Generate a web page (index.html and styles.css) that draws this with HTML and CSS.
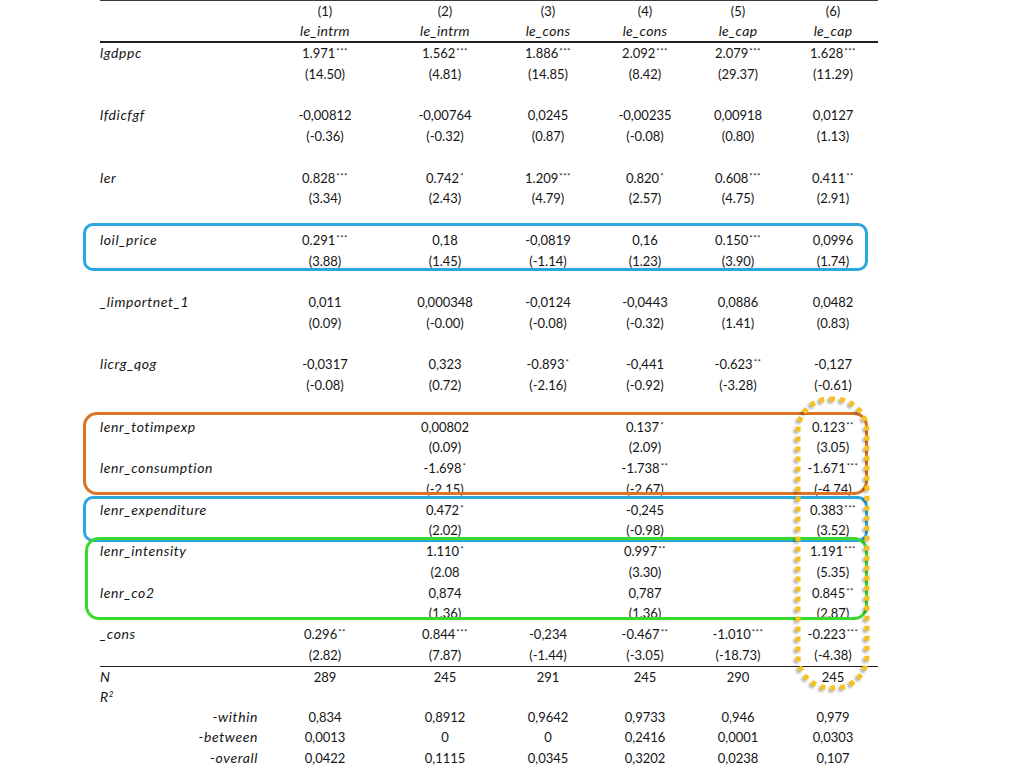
FILE: index.html
```html
<!DOCTYPE html>
<html>
<head>
<meta charset="utf-8">
<link rel="stylesheet" href="styles.css">
</head>
<body>
<div class="sheet">
  <div class="table">
    <div class="head">
      <div class="r hr"><span></span><span>(1)</span><span>(2)</span><span>(3)</span><span>(4)</span><span>(5)</span><span>(6)</span></div>
      <div class="r hr it"><span></span><span>le_intrm</span><span>le_intrm</span><span>le_cons</span><span>le_cons</span><span>le_cap</span><span>le_cap</span></div>
    </div>
    <div class="body">
      <div class="r"><span class="lab">lgdppc</span><span>1.971<sup>***</sup></span><span>1.562<sup>***</sup></span><span>1.886<sup>***</sup></span><span>2.092<sup>***</sup></span><span>2.079<sup>***</sup></span><span>1.628<sup>***</sup></span></div>
      <div class="r"><span></span><span>(14.50)</span><span>(4.81)</span><span>(14.85)</span><span>(8.42)</span><span>(29.37)</span><span>(11.29)</span></div>
      <div class="gap"></div>
      <div class="r"><span class="lab">lfdicfgf</span><span>-0,00812</span><span>-0,00764</span><span>0,0245</span><span>-0,00235</span><span>0,00918</span><span>0,0127</span></div>
      <div class="r"><span></span><span>(-0.36)</span><span>(-0.32)</span><span>(0.87)</span><span>(-0.08)</span><span>(0.80)</span><span>(1.13)</span></div>
      <div class="gap"></div>
      <div class="r"><span class="lab">ler</span><span>0.828<sup>***</sup></span><span>0.742<sup>*</sup></span><span>1.209<sup>***</sup></span><span>0.820<sup>*</sup></span><span>0.608<sup>***</sup></span><span>0.411<sup>**</sup></span></div>
      <div class="r"><span></span><span>(3.34)</span><span>(2.43)</span><span>(4.79)</span><span>(2.57)</span><span>(4.75)</span><span>(2.91)</span></div>
      <div class="gap"></div>
      <div class="r"><span class="lab">loil_price</span><span>0.291<sup>***</sup></span><span>0,18</span><span>-0,0819</span><span>0,16</span><span>0.150<sup>***</sup></span><span>0,0996</span></div>
      <div class="r"><span></span><span>(3.88)</span><span>(1.45)</span><span>(-1.14)</span><span>(1.23)</span><span>(3.90)</span><span>(1.74)</span></div>
      <div class="gap"></div>
      <div class="r"><span class="lab">_limportnet_1</span><span>0,011</span><span>0,000348</span><span>-0,0124</span><span>-0,0443</span><span>0,0886</span><span>0,0482</span></div>
      <div class="r"><span></span><span>(0.09)</span><span>(-0.00)</span><span>(-0.08)</span><span>(-0.32)</span><span>(1.41)</span><span>(0.83)</span></div>
      <div class="gap"></div>
      <div class="r"><span class="lab">licrg_qog</span><span>-0,0317</span><span>0,323</span><span>-0.893<sup>*</sup></span><span>-0,441</span><span>-0.623<sup>**</sup></span><span>-0,127</span></div>
      <div class="r"><span></span><span>(-0.08)</span><span>(0.72)</span><span>(-2.16)</span><span>(-0.92)</span><span>(-3.28)</span><span>(-0.61)</span></div>
      <div class="gap"></div>
      <div class="r"><span class="lab">lenr_totimpexp</span><span></span><span>0,00802</span><span></span><span>0.137<sup>*</sup></span><span></span><span>0.123<sup>**</sup></span></div>
      <div class="r"><span></span><span></span><span>(0.09)</span><span></span><span>(2.09)</span><span></span><span>(3.05)</span></div>
      <div class="r"><span class="lab">lenr_consumption</span><span></span><span>-1.698<sup>*</sup></span><span></span><span>-1.738<sup>**</sup></span><span></span><span>-1.671<sup>***</sup></span></div>
      <div class="r"><span></span><span></span><span>(-2.15)</span><span></span><span>(-2.67)</span><span></span><span>(-4.74)</span></div>
      <div class="r"><span class="lab">lenr_expenditure</span><span></span><span>0.472<sup>*</sup></span><span></span><span>-0,245</span><span></span><span>0.383<sup>***</sup></span></div>
      <div class="r"><span></span><span></span><span>(2.02)</span><span></span><span>(-0.98)</span><span></span><span>(3.52)</span></div>
      <div class="r"><span class="lab">lenr_intensity</span><span></span><span>1.110<sup>*</sup></span><span></span><span>0.997<sup>**</sup></span><span></span><span>1.191<sup>***</sup></span></div>
      <div class="r"><span></span><span></span><span>(2.08</span><span></span><span>(3.30)</span><span></span><span>(5.35)</span></div>
      <div class="r"><span class="lab">lenr_co2</span><span></span><span>0,874</span><span></span><span>0,787</span><span></span><span>0.845<sup>**</sup></span></div>
      <div class="r"><span></span><span></span><span>(1.36)</span><span></span><span>(1.36)</span><span></span><span>(2.87)</span></div>
      <div class="r"><span class="lab">_cons</span><span>0.296<sup>**</sup></span><span>0.844<sup>***</sup></span><span>-0,234</span><span>-0.467<sup>**</sup></span><span>-1.010<sup>***</sup></span><span>-0.223<sup>***</sup></span></div>
      <div class="r"><span></span><span>(2.82)</span><span>(7.87)</span><span>(-1.44)</span><span>(-3.05)</span><span>(-18.73)</span><span>(-4.38)</span></div>
    </div>
    <div class="stats">
      <div class="r sr"><span class="lab">N</span><span>289</span><span>245</span><span>291</span><span>245</span><span>290</span><span>245</span></div>
      <div class="r sr"><span class="lab">R<sup class="two">2</sup></span><span></span><span></span><span></span><span></span><span></span><span></span></div>
      <div class="r sr"><span class="lab sub">-within</span><span>0,834</span><span>0,8912</span><span>0,9642</span><span>0,9733</span><span>0,946</span><span>0,979</span></div>
      <div class="r sr"><span class="lab sub">-between</span><span>0,0013</span><span>0</span><span>0</span><span>0,2416</span><span>0,0001</span><span>0,0303</span></div>
      <div class="r sr"><span class="lab sub">-overall</span><span>0,0422</span><span>0,1115</span><span>0,0345</span><span>0,3202</span><span>0,0238</span><span>0,107</span></div>
    </div>
  </div>

  <div class="mark blue b1"></div>
  <div class="mark orange"></div>
  <div class="mark blue b2"></div>
  <div class="mark green"></div>
  <svg class="dots" width="78" height="298" viewBox="0 0 78 298">
    <rect x="4" y="4" width="69" height="289" rx="32" ry="32" fill="none" stroke="#f6c21e" stroke-width="5" stroke-dasharray="5 5"/>
  </svg>
</div>
</body>
</html>
```

FILE: styles.css
```css
html, body {
  margin: 0;
  padding: 0;
  background: #ffffff;
}

body {
  font-family: Lato, "Open Sans", sans-serif;
  font-size: 13px;
  color: #151515;
}

.sheet {
  position: relative;
  width: 1024px;
  height: 768px;
  overflow: hidden;
}

.table {
  margin-left: 100px;
  width: 778px;
  border-top: 1px solid #3a3a3a;
}

.r {
  display: grid;
  grid-template-columns: 165px 120px 120px 86px 108px 78px 101px;
  height: 20.75px;
  line-height: 20.75px;
  text-align: center;
  white-space: nowrap;
}

.r > span:last-child {
  padding-left: 11px;
}

.hr {
  height: 20px;
  line-height: 20px;
}

.it span {
  font-style: italic;
  font-size: 14px;
  letter-spacing: 0.3px;
}

.head {
  border-bottom: 2px solid #1e1e1e;
}

.body {
  border-bottom: 1.5px solid #1e1e1e;
}

.stats {
  border-bottom: 1.5px solid #1e1e1e;
}

.sr {
  height: 20.25px;
  line-height: 20.25px;
}

.gap {
  height: 20.75px;
}

.lab {
  text-align: left;
  font-style: italic;
  font-size: 14px;
  letter-spacing: 0.6px;
}

.lab.sub {
  text-align: right;
  padding-right: 7px;
}

sup {
  font-size: 8px;
  line-height: 0;
  vertical-align: baseline;
  position: relative;
  top: -4px;
  margin-left: 1px;
  letter-spacing: 0.5px;
}

sup.two {
  font-size: 8px;
  top: -5px;
  margin-left: 0;
  font-style: italic;
}

.mark {
  position: absolute;
  box-sizing: border-box;
  border: 3px solid;
}

.blue {
  border-color: #2ba6de;
  border-radius: 10px;
}

.b1 {
  left: 83px;
  top: 223px;
  width: 785px;
  height: 48px;
}

.orange {
  border-color: #dc7424;
  border-radius: 14px;
  left: 83px;
  top: 412px;
  width: 785px;
  height: 83px;
}

.b2 {
  left: 83px;
  top: 496px;
  width: 785px;
  height: 46px;
}

.green {
  border-color: #3ad92c;
  border-width: 3.5px;
  border-radius: 14px;
  left: 85px;
  top: 537px;
  width: 783px;
  height: 83px;
}

.dots {
  position: absolute;
  left: 794px;
  top: 395px;
  filter: drop-shadow(-2px 2px 1px rgba(0, 0, 0, 0.3));
}
```
